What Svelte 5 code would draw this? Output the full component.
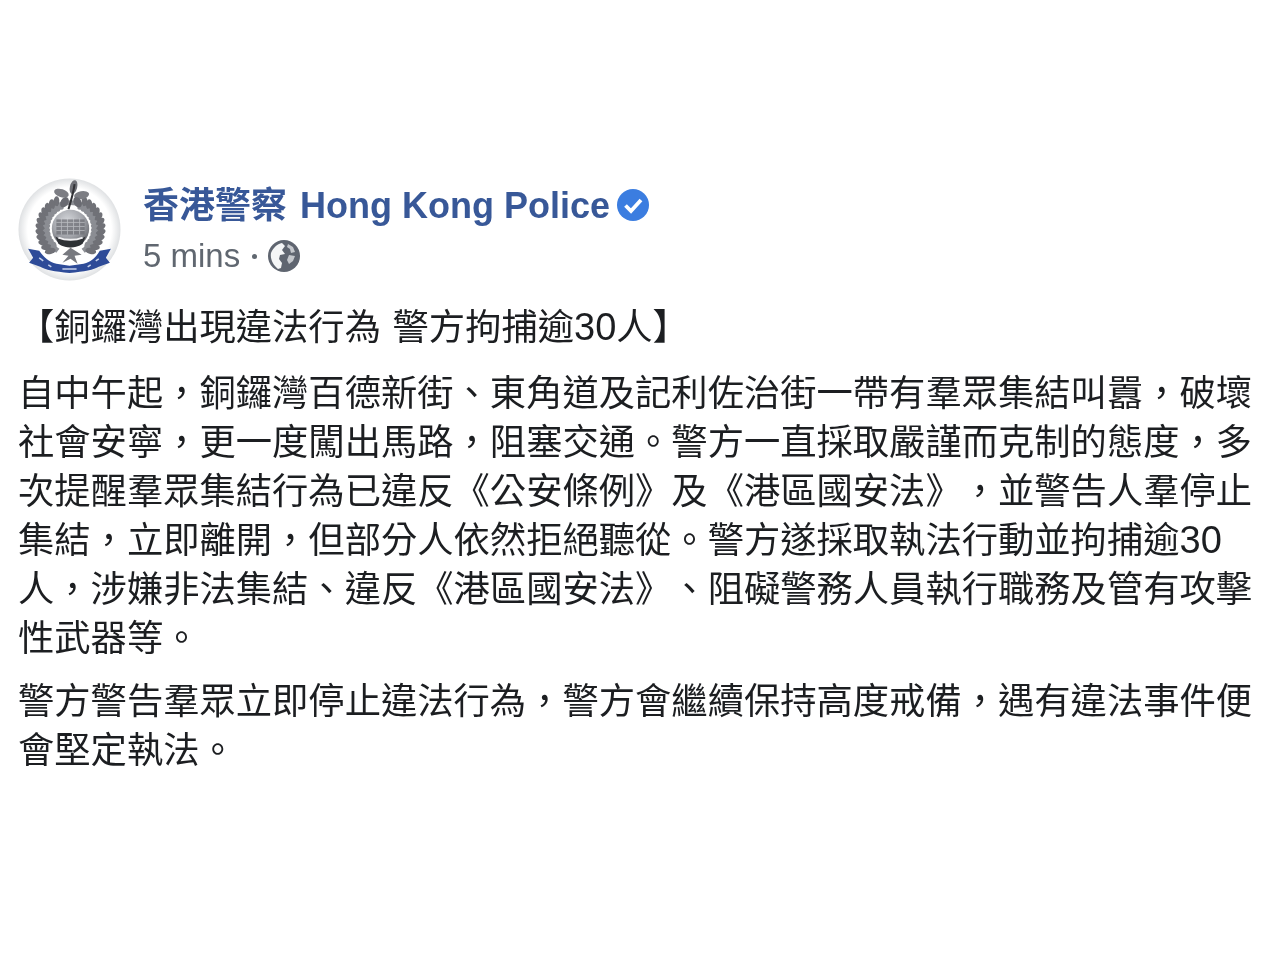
<script>
  const paragraphs = [
    ['自中午起，銅鑼灣百德新街、東角道及記利佐治街一帶有羣眾集結叫囂，破壞','社會安寧，更一度闖出馬路，阻塞交通。警方一直採取嚴謹而克制的態度，多','次提醒羣眾集結行為已違反《公安條例》及《港區國安法》，並警告人羣停止','集結，立即離開，但部分人依然拒絕聽從。警方遂採取執法行動並拘捕逾30','人，涉嫌非法集結、違反《港區國安法》、阻礙警務人員執行職務及管有攻擊','性武器等。'],
    ['警方警告羣眾立即停止違法行為，警方會繼續保持高度戒備，遇有違法事件便','會堅定執法。']
  ];
  const split = (line) => line.split(/(\d+)/);
  // laurel leaves on the crest's wreath: angle in degrees from the top, clockwise
  const leaves = [];
  for (let a = 28; a <= 142; a += 10) {
    for (const side of [-1, 1]) {
      for (const [r, tilt, shade] of [[25, 35, '#8b8d93'], [30, -35, '#6f7177']]) {
        const rad = (a * Math.PI) / 180;
        leaves.push({
          x: 52 + side * r * Math.sin(rad),
          y: 50 - r * Math.cos(rad),
          rot: side * (a + tilt),
          fill: shade
        });
      }
    }
  }
</script>

<main class="post">
  <header class="head">
    <svg class="avatar" viewBox="0 0 102 102" aria-label="香港警察">
      <defs>
        <radialGradient id="disc" cx="50%" cy="50%" r="50%"><stop offset="0.82" stop-color="#fff"/><stop offset="1" stop-color="#dfe1e3"/></radialGradient>
        <radialGradient id="orb" cx="42%" cy="30%" r="70%"><stop offset="0" stop-color="#d4d6da"/><stop offset="0.6" stop-color="#a2a4aa"/><stop offset="1" stop-color="#66686e"/></radialGradient>
        <filter id="soft"><feGaussianBlur stdDeviation="0.7"/></filter>
      </defs>
      <circle cx="51" cy="51" r="50.5" fill="url(#disc)"/>
      <g filter="url(#soft)">
        <path d="M52 50m-28 0a28 28 0 1 1 56 0a28 28 0 0 1-14 24l-3-4a23 23 0 1 0-22 0l-3 4a28 28 0 0 1-14-24z" fill="#8d8f95"/>
        {#each leaves as l}
          <ellipse cx={l.x} cy={l.y} rx="3" ry="5.4" fill={l.fill} transform="rotate({l.rot} {l.x} {l.y})"/>
        {/each}
        <!-- bauhinia crown -->
        <ellipse cx="55" cy="9" rx="3.6" ry="7" fill="#6f7177" transform="rotate(14 55 9)"/>
        <ellipse cx="63" cy="17" rx="7.5" ry="4" fill="#7b7d83" transform="rotate(-10 63 17)"/>
        <ellipse cx="43" cy="15" rx="7.5" ry="4" fill="#7b7d83" transform="rotate(18 43 15)"/>
        <ellipse cx="59" cy="24" rx="3.8" ry="5.5" fill="#696b71" transform="rotate(-28 59 24)"/>
        <ellipse cx="46" cy="24" rx="3.8" ry="5.5" fill="#696b71" transform="rotate(32 46 24)"/>
        <path d="M56 6c-1 8-3 15-6 25" stroke="#303136" stroke-width="2" fill="none"/>
        <!-- globe with harbour scene -->
        <circle cx="52" cy="50" r="18.5" fill="url(#orb)"/>
        <path d="M38 41h28v15H38z" fill="#6d6f76" opacity=".75"/>
        <path d="M38 44h28M38 48h28M38 52h28M43 40v16M49 40v16M55 40v16M61 40v16" stroke="#d5d7db" stroke-width=".8" opacity=".65"/>
        <path d="M37 58c7 5 23 5 30 0l-3 7c-7 5-17 5-24 0z" fill="#2f3035"/>
        <path d="M40 59c7 3 17 3 24 0" stroke="#f0f0f2" stroke-width="2" fill="none"/>
        <path d="M52 69l-8 7 6 1-6 7 8-4 7 5-3-8 7-1z" fill="#77797f"/>
        <!-- blue scroll -->
        <path d="M10 70l11 2c5 7 10 11 17 13l13 2 14-2c7-2 12-6 16-13l11-2-5 9 4 5-11 4c-5 3-14 5-29 6-15-1-24-3-29-6l-11-4 4-5z" fill="#2e4c98"/>
        <path d="M21 79l4 3M30 86l3 2M44 90h14M69 88l3-2M77 82l3-2" stroke="#c7d1ea" stroke-width="1.5"/>
      </g>
    </svg>
    <div class="identity">
      <div class="name-row">
        <span class="name">香港警察</span>
        <span class="name latin">Hong Kong Police</span>
        <svg class="badge" viewBox="0 0 32 32" aria-hidden="true">
          <circle cx="16" cy="16" r="16" fill="#3b7de0"/>
          <path d="M8.5 16.5l5.5 5.5L24 11" fill="none" stroke="#fff" stroke-width="3.8"/>
        </svg>
      </div>
      <div class="meta">
        <span>5 mins</span><i class="dot"></i>
        <svg class="globe" viewBox="0 0 32 32" aria-hidden="true">
          <circle cx="16" cy="16" r="16" fill="#5f6570"/>
          <path d="M3 13c2-5 6-9 11-10l3 3-3 4 3 4-5 1-1 4 3 4-1 5-3 1c-5-4-8-10-7-16z" fill="#f4f5f6"/>
          <path d="M20 4l5 3 2 5-4 1-1-4-3-2zM21 15l6 1-2 5-4 3-2-4z" fill="#c4c7cc"/>
        </svg>
      </div>
    </div>
  </header>

  <h1 class="title">【銅鑼灣出現違法行為 警方拘捕逾<span class="num">30</span>人】</h1>

  {#each paragraphs as lines}
    <p class="para">
      {#each lines as line}
        <span class="line">{#each split(line) as part, i}{#if i % 2}<span class="num">{part}</span>{:else}{part}{/if}{/each}</span>
      {/each}
    </p>
  {/each}
</main>

<style>
  :global(body) {
    margin: 0;
    background: #fff;
  }
  .post {
    box-sizing: border-box;
    width: 1280px;
    height: 960px;
    padding: 178px 18px 0;
    font-family: "Liberation Sans", "Noto Sans CJK TC", sans-serif;
    color: #1c1e21;
    filter: blur(0.45px);
    text-spacing-trim: space-all;
  }
  .head {
    display: flex;
    gap: 22px;
  }
  .avatar {
    width: 103px;
    height: 103px;
    flex: none;
  }
  .identity {
    display: flex;
    flex-direction: column;
    padding-top: 3px;
    gap: 3px;
  }
  .name-row {
    display: flex;
    align-items: center;
    height: 48px;
  }
  .name {
    margin-bottom: 6px;
    font-size: 36px;
    font-weight: 700;
    color: #385898;
    white-space: nowrap;
  }
  .latin {
    margin-left: 13px;
    margin-bottom: -2px;
  }
  .badge {
    width: 32px;
    height: 32px;
    margin-left: 7px;
    flex: none;
  }
  .meta {
    display: flex;
    align-items: center;
    height: 48px;
    font-size: 33px;
    color: #606770;
  }
  .dot {
    width: 5px;
    height: 5px;
    margin: 0 11px 0 12px;
    border-radius: 50%;
    background: #606770;
  }
  .globe {
    width: 32px;
    height: 32px;
    flex: none;
  }
  .title {
    margin: 22px 0 0;
    font-size: 36.3px;
    font-weight: 400;
    line-height: 49px;
    word-spacing: 1.5px;
    white-space: nowrap;
  }
  .para {
    margin: 0;
    font-size: 36.3px;
    line-height: 49px;
  }
  .title + .para {
    margin-top: 17px;
  }
  .para + .para {
    margin-top: 14px;
  }
  .line {
    display: block;
    white-space: nowrap;
  }
  .num {
    font-size: 38px;
    line-height: 0;
  }
</style>
